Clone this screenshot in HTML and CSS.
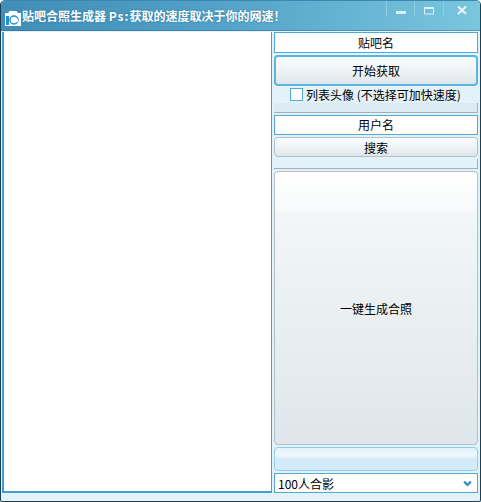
FILE: index.html
```html
<!DOCTYPE html>
<html lang="zh-CN">
<head>
  <meta charset="UTF-8">
  <title>贴吧合照生成器</title>
  <link rel="stylesheet" href="styles.css">
</head>
<body>
  <div class="window">
    <header class="titlebar">
      <svg class="app-icon" width="16" height="16" viewBox="0 0 16 16">
        <rect x="0" y="3" width="16" height="13" fill="#ffffff"/>
        <path d="M0 5h3l2-3h6l2 3h3" fill="none" stroke="#ffffff" stroke-width="2"/>
        <rect x="1" y="6" width="3" height="9" fill="#1f8fd8"/>
        <circle cx="9" cy="10" r="4" fill="none" stroke="#1f8fd8" stroke-width="1.5"/>
        <rect x="10" y="9" width="3" height="3" fill="#ffffff"/>
      </svg>
      <span class="title">贴吧合照生成器 <span class="title-ps">Ps:</span>获取的速度取决于你的网速！</span>
      <div class="win-buttons">
        <button class="win-btn"><svg width="12" height="12" viewBox="0 0 12 12"><rect x="1" y="8" width="10" height="3" fill="#dff1f8"/></svg></button>
        <button class="win-btn win-max"><svg width="12" height="12" viewBox="0 0 12 12"><rect x="1.500" y="5" width="9" height="6" fill="none" stroke="#dff1f8"/><rect x="1" y="4" width="10" height="2" fill="#dff1f8"/></svg></button>
        <button class="win-btn win-close"><svg width="12" height="12" viewBox="0 0 12 12"><path d="M2 3.500l8 7.500M10 3.500l-8 7.500" stroke="#e6f4fa" stroke-width="2.200" fill="none"/></svg></button>
      </div>
    </header>

    <div class="content">
      <div class="list-panel"></div>
      <div class="side">
        <div class="field field-top">贴吧名</div>
        <button class="btn btn-start">开始获取</button>
        <label class="check-row"><span class="check"></span>列表头像 (不选择可加快速度)</label>
        <div class="progress"></div>
        <div class="field field-user">用户名</div>
        <button class="btn btn-search">搜索</button>
        <div class="progress progress-b"></div>
        <button class="btn btn-big">一键生成合照</button>
        <button class="btn btn-blue"></button>
        <div class="select">
          <span>100人合影</span>
          <svg width="9" height="7" viewBox="0 0 12 8"><path d="M1.500 1.500L6 6l4.500-4.500" fill="none" stroke="#2f8fc8" stroke-width="3"/></svg>
        </div>
      </div>
    </div>
  </div>
</body>
</html>
```

FILE: styles.css
```css
html, body {
  margin: 0;
  padding: 0;
  width: 481px;
  height: 502px;
  overflow: hidden;
  background: #ffffff;
}

body {
  font-family: "Noto Sans CJK SC", "Liberation Sans", sans-serif;
  font-size: 12px;
  color: #000000;
}

.window {
  box-sizing: border-box;
  width: 481px;
  height: 502px;
  display: flex;
  flex-direction: column;
  background: #e3f1f8;
  border: 1px solid #1d3f55;
  border-top: 1px solid #3d86ad;
  border-radius: 5px 5px 2px 2px;
  overflow: hidden;
}

.titlebar {
  flex: none;
  height: 30px;
  display: flex;
  align-items: center;
  padding-left: 4px;
  background: linear-gradient(90deg, #418db6 0%, #4f9fc6 40%, #79c6de 100%);
  box-shadow: inset 0 -1px rgba(40, 100, 140, 0.45);
  color: #ffffff;
}

.app-icon {
  flex: none;
  margin: 4px 1px 0 0;
}

.title {
  flex: 1;
  font-weight: bold;
  line-height: 30px;
  white-space: nowrap;
  text-shadow: 0 0 2px #2d7396;
}

.title-ps {
  letter-spacing: 1px;
}

.win-buttons {
  flex: none;
  align-self: flex-start;
  display: flex;
  height: 15px;
  margin-right: 1px;
}

.win-btn {
  width: 28px;
  height: 15px;
  padding: 0;
  border: none;
  border-left: 1px solid #8fcde2;
  background: transparent;
  display: flex;
  align-items: center;
  justify-content: center;
}

.win-max {
  width: 29px;
}

.win-close {
  width: 36px;
}

.content {
  flex: 1;
  display: flex;
  padding: 1px 1px 0 1px;
  gap: 2px;
}

.list-panel {
  box-sizing: border-box;
  width: 270px;
  height: 461px;
  background: #ffffff;
  border: 1px solid #3f9fd0;
  border-width: 0 1px 2px 2px;
}

.side {
  width: 204px;
  display: flex;
  flex-direction: column;
}

.field {
  box-sizing: border-box;
  height: 21px;
  line-height: 19px;
  text-align: center;
  background: #ffffff;
  border: 1px solid #4fa8d8;
}

.field-user {
  height: 20px;
  line-height: 18px;
  margin-top: 2px;
}

.btn {
  box-sizing: border-box;
  display: block;
  width: 100%;
  padding: 0;
  font: inherit;
  color: #000000;
  border: 1px solid #b4c0c8;
  border-radius: 4px;
  background: linear-gradient(#fafcfd 0%, #f2f6f8 40%, #dfe6ea 100%);
}

.btn-start {
  height: 31px;
  margin-top: 2px;
  border: 2px solid #5cb4e0;
}

.check-row {
  height: 16px;
  display: flex;
  align-items: center;
  justify-content: center;
  gap: 3px;
  padding-right: 1px;
  white-space: nowrap;
}

.check {
  box-sizing: border-box;
  width: 13px;
  height: 13px;
  background: #ffffff;
  border: 1px solid #4fa8d8;
}

.progress {
  box-sizing: border-box;
  height: 10px;
  margin-top: 1px;
  background: #dcebf2;
  border-right: 1px solid #a8aeb2;
  border-bottom: 1px solid #a8aeb2;
}

.btn-search {
  height: 20px;
  margin-top: 2px;
}

.progress-b {
  margin-top: 2px;
  background: #e3f1f8;
}

.btn-big {
  height: 274px;
  margin-top: 2px;
  background: linear-gradient(#ffffff 0%, #f8fafb 14%, #f2f6f7 15%, #dfe6eb 100%);
}

.btn-blue {
  height: 24px;
  margin-top: 2px;
  border-color: #8ed0f0;
  background: linear-gradient(#e4f3fb 0%, #eef8fc 35%, #d4ebf9 50%, #d2eafa 100%);
}

.select {
  box-sizing: border-box;
  height: 20px;
  margin-top: 2px;
  padding: 0 5px 0 3px;
  display: flex;
  align-items: center;
  justify-content: space-between;
  background: #ffffff;
  border: 1px solid #4fa8d8;
}
```
